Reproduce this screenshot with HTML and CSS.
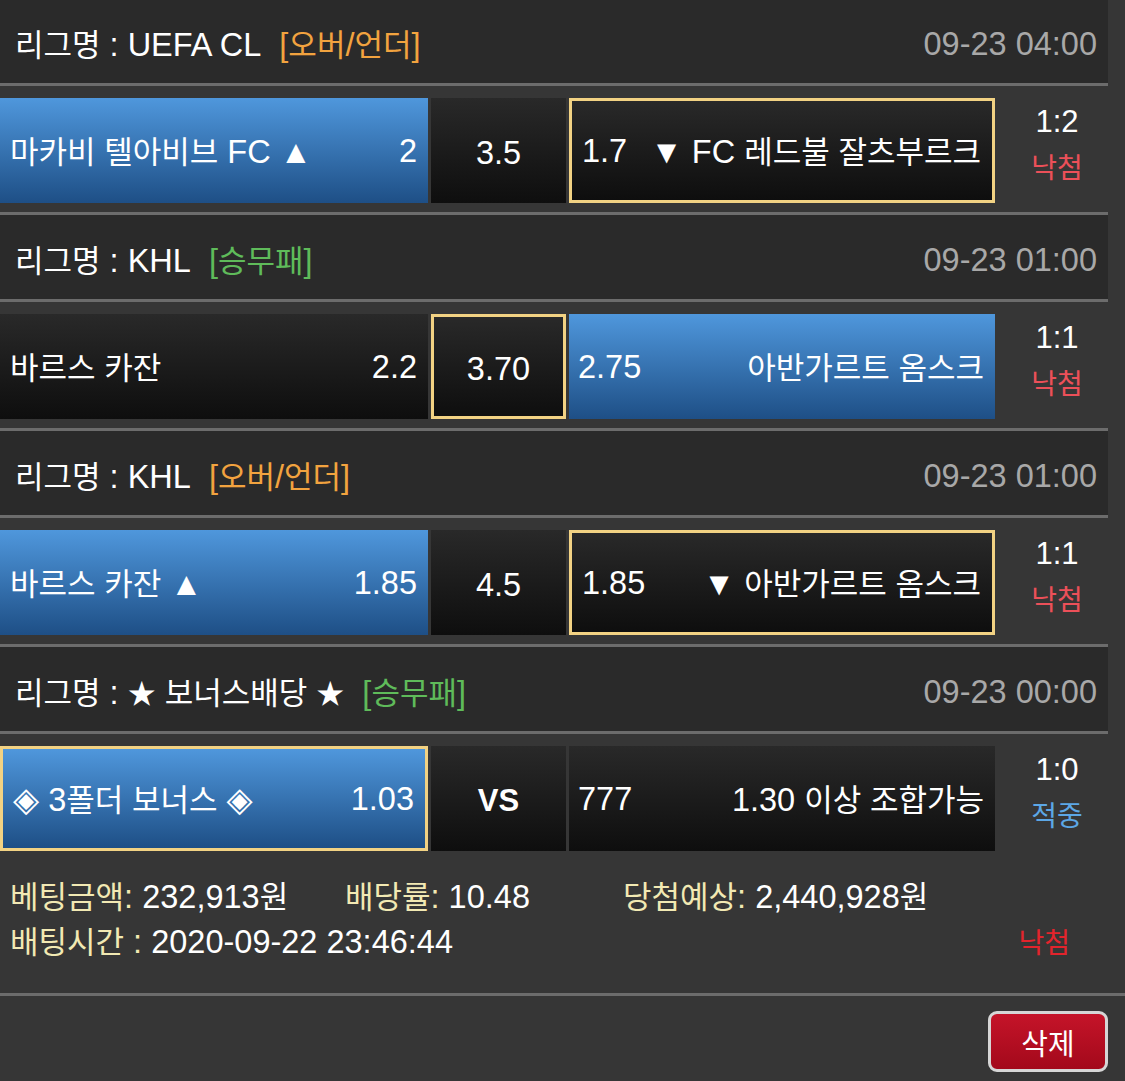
FILE: index.html
```html
<!DOCTYPE html>
<html lang="ko">
<head>
<meta charset="utf-8">
<title>베팅내역</title>
<link rel="stylesheet" href="styles.css">
</head>
<body>
<div class="board">
  <section class="match">
    <div class="league">
      <span class="lname"><span class="k">리그명</span> : UEFA CL</span>
      <span class="tag ou">[<span class="k">오버</span>/<span class="k">언더</span>]</span>
      <span class="date">09-23 04:00</span>
    </div>
    <div class="bet">
      <div class="pick home blue"><span><span class="k">마카비 텔아비브</span> FC ▲</span><span>2</span></div>
      <div class="pick mid">3.5</div>
      <div class="pick away sel"><span>1.7</span><span>▼ FC <span class="k">레드불 잘츠부르크</span></span></div>
      <div class="score"><div>1:2</div><div class="lose"><span class="k">낙첨</span></div></div>
    </div>
  </section>

  <section class="match">
    <div class="league">
      <span class="lname"><span class="k">리그명</span> : KHL</span>
      <span class="tag wdl">[<span class="k">승무패</span>]</span>
      <span class="date">09-23 01:00</span>
    </div>
    <div class="bet">
      <div class="pick home"><span><span class="k">바르스 카잔</span></span><span>2.2</span></div>
      <div class="pick mid sel">3.70</div>
      <div class="pick away blue"><span>2.75</span><span><span class="k">아반가르트 옴스크</span></span></div>
      <div class="score"><div>1:1</div><div class="lose"><span class="k">낙첨</span></div></div>
    </div>
  </section>

  <section class="match">
    <div class="league">
      <span class="lname"><span class="k">리그명</span> : KHL</span>
      <span class="tag ou">[<span class="k">오버</span>/<span class="k">언더</span>]</span>
      <span class="date">09-23 01:00</span>
    </div>
    <div class="bet">
      <div class="pick home blue"><span><span class="k">바르스 카잔</span> ▲</span><span>1.85</span></div>
      <div class="pick mid">4.5</div>
      <div class="pick away sel"><span>1.85</span><span>▼ <span class="k">아반가르트 옴스크</span></span></div>
      <div class="score"><div>1:1</div><div class="lose"><span class="k">낙첨</span></div></div>
    </div>
  </section>

  <section class="match">
    <div class="league">
      <span class="lname"><span class="k">리그명</span> : <span class="star">★</span> <span class="k">보너스배당</span> <span class="star">★</span></span>
      <span class="tag wdl">[<span class="k">승무패</span>]</span>
      <span class="date">09-23 00:00</span>
    </div>
    <div class="bet final">
      <div class="pick home blue sel"><span><span class="dia">◈</span> 3<span class="k">폴더 보너스</span> <span class="dia">◈</span></span><span>1.03</span></div>
      <div class="pick mid vs">VS</div>
      <div class="pick away"><span>777</span><span>1.30 <span class="k">이상 조합가능</span></span></div>
      <div class="score"><div>1:0</div><div class="win"><span class="k">적중</span></div></div>
    </div>
  </section>
</div>

<div class="summary">
  <div class="sum-row">
    <div><span class="lbl"><span class="k">베팅금액</span>:</span> 232,913<span class="k">원</span></div>
    <div><span class="lbl"><span class="k">배당률</span>:</span> 10.48</div>
    <div><span class="lbl"><span class="k">당첨예상</span>:</span> 2,440,928<span class="k">원</span></div>
  </div>
  <div class="sum-row2">
    <div><span class="lbl"><span class="k">배팅시간</span> :</span> 2020-09-22 23:46:44</div>
    <div class="result"><span class="k">낙첨</span></div>
  </div>
</div>

<div class="actions">
  <button class="del" type="button"><span class="k">삭제</span></button>
</div>
</body>
</html>
```

FILE: styles.css
```css
html, body {
  margin: 0;
  padding: 0;
}

body {
  width: 1125px;
  height: 1081px;
  overflow: hidden;
  background: #363636;
  color: #ffffff;
  font-family: "Liberation Sans", "Noto Sans CJK KR", sans-serif;
  font-size: 32.5px;
}

.k {
  font-family: "Noto Sans CJK KR", sans-serif;
  font-size: 31px;
}

.star {
  font-family: "Noto Sans CJK KR", "DejaVu Sans", sans-serif;
  font-size: 28px;
}

.dia {
  font-family: "DejaVu Sans", "Noto Sans CJK KR", sans-serif;
  font-size: 34px;
  line-height: 1;
}

.board {
  width: 1108px;
  margin-top: -1px;
}

.league {
  height: 87px;
  box-sizing: border-box;
  display: flex;
  align-items: center;
  padding: 6px 11px 0 15px;
  background: #2a2a2a;
  border-bottom: 3px solid #6c6c6c;
  line-height: 40px;
  white-space: nowrap;
}

.tag {
  margin-left: 18px;
}

.tag.ou {
  color: #f2a33f;
}

.tag.wdl {
  color: #5fbb5a;
}

.date {
  margin-left: auto;
  color: #a8a8a8;
}

.bet {
  display: flex;
  padding: 12px 0 9px;
  border-bottom: 3px solid #6c6c6c;
}

.bet.final {
  border-bottom: none;
}

.pick {
  height: 105px;
  box-sizing: border-box;
  display: flex;
  align-items: center;
  justify-content: space-between;
  padding: 0 11px 0 10px;
  background: linear-gradient(#292929, #0e0e0e);
  line-height: 40px;
  white-space: nowrap;
}

.pick.home {
  width: 428px;
}

.pick.mid {
  width: 135px;
  margin-left: 3px;
  justify-content: center;
  padding: 4px 0 0;
}

.pick.away {
  width: 426px;
  margin-left: 3px;
  padding-left: 9px;
}

.pick.blue {
  background: linear-gradient(#4f97dc, #1e4f86);
}

.pick.sel {
  border: 3px solid #f2d283;
}

.pick.sel.home {
  padding-left: 10px;
}

.pick.sel.away {
  padding-left: 10px;
}

.pick.vs {
  font-weight: bold;
  font-size: 31px;
}

.score {
  width: 113px;
  box-sizing: border-box;
  padding: 1px 0 0 11px;
  text-align: center;
  line-height: 45px;
  font-size: 31px;
}

.score .k {
  font-size: 28px;
}

.lose {
  color: #ec5059;
}

.win {
  color: #5ca7e6;
}

.summary {
  padding: 15px 55px 28px 10px;
  border-bottom: 3px solid #6c6c6c;
  line-height: 45px;
  white-space: nowrap;
}

.summary .k {
  line-height: 1;
}

.sum-row {
  display: grid;
  grid-template-columns: 335px 278px 1fr;
}

.sum-row2 {
  display: flex;
  justify-content: space-between;
}

.lbl {
  color: #f2e9b3;
}

.result {
  color: #e3242c;
}

.result .k {
  font-size: 28px;
}

.actions {
  display: flex;
  justify-content: flex-end;
  padding: 15px 17px 0 0;
}

.del {
  width: 120px;
  height: 61px;
  box-sizing: border-box;
  border: 3px solid #d6d6d6;
  border-radius: 9px;
  background: linear-gradient(#c51429, #a3091b);
  color: #ffffff;
  padding: 0;
  display: flex;
  align-items: center;
  justify-content: center;
  font-family: "Noto Sans CJK KR", sans-serif;
  line-height: 40px;
}

.del .k {
  font-size: 29px;
}
```
